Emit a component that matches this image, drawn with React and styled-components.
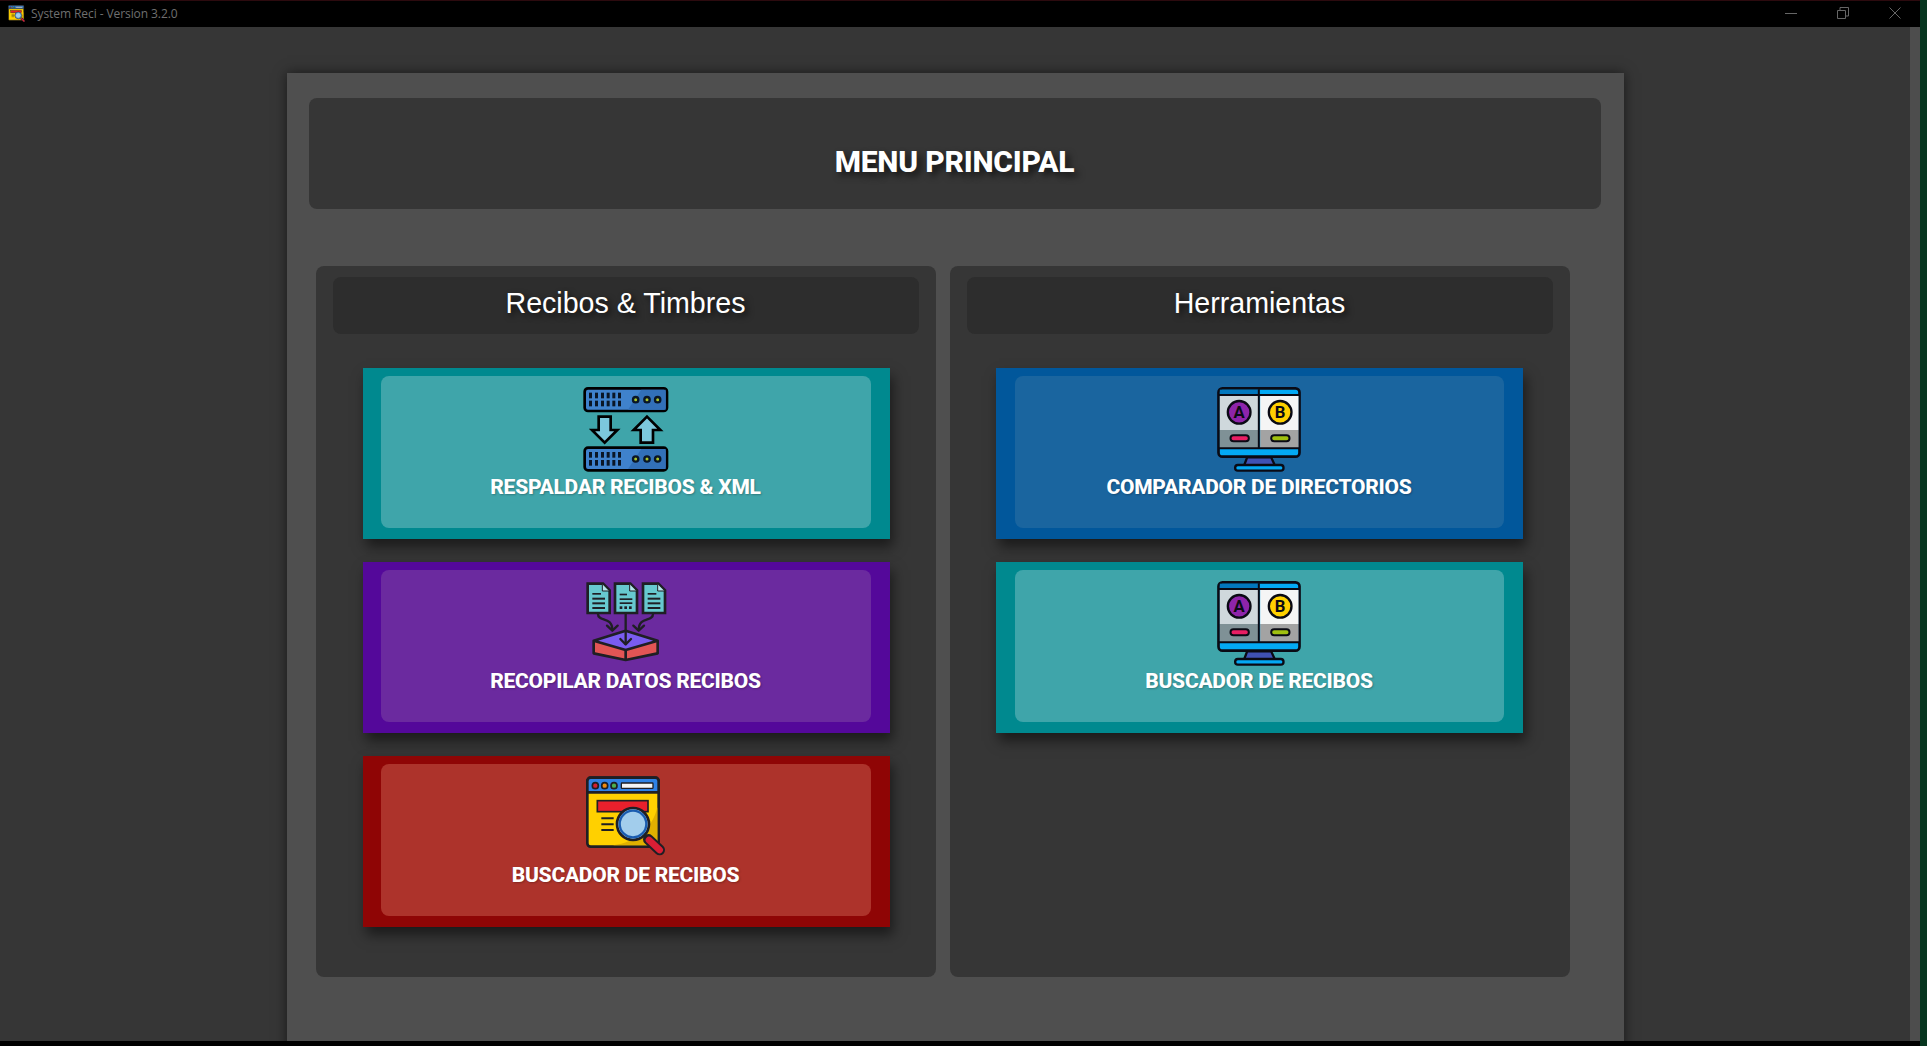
import React from "react"
import styled, { createGlobalStyle } from "styled-components"

const GlobalStyle = createGlobalStyle`
  html, body {
    margin: 0;
    padding: 0;
    height: 100%;
    overflow: hidden;
    background: #07361f;
  }
`

const Frame = styled.div`
  width: 1927px;
  height: 1046px;
  display: grid;
  grid-template-columns: 1920px 7px;
  overflow: hidden;
`

const Window = styled.div`
  display: flex;
  flex-direction: column;
  height: 1046px;
  background: #000;
`

const TitleBar = styled.header`
  height: 27px;
  box-sizing: border-box;
  flex: none;
  display: flex;
  align-items: center;
  padding: 0 19px 2px 8px;
  background: #000;
  border-top: 1px solid #2c0a0e;
  font-family: "Open Sans", "Noto Sans", sans-serif;
  font-size: 12px;
  color: #6f6f6f;
`

const TitleIcon = styled.svg`
  width: 17px;
  height: 17px;
  margin-right: 6px;
`

const TitleText = styled.span`
  flex: 1;
  letter-spacing: -0.08px;
`

const WinControls = styled.div`
  display: flex;
  gap: 40px;
`

const WinIcon = styled.svg`
  width: 12px;
  height: 12px;
  stroke: #666;
  fill: none;
  stroke-width: 1;
`

const Body = styled.div`
  height: 1014px;
  flex: none;
  display: flex;
  overflow: hidden;
`

const Content = styled.main`
  flex: 1;
  background: #363636;
  display: flex;
  justify-content: center;
  padding-top: 46px;
`

const Scrollbar = styled.div`
  width: 10px;
  flex: none;
  background: #4d4d4d;
`

const Panel = styled.div`
  width: 1337px;
  height: 980px;
  flex: none;
  box-sizing: border-box;
  padding: 25px 23px 0 22px;
  background: #4f4f4f;
  box-shadow: 0 0 12px rgba(0, 0, 0, 0.55);
`

const Header = styled.div`
  height: 111px;
  box-sizing: border-box;
  padding-top: 47px;
  background: #363636;
  border-radius: 8px;
  text-align: center;
`

const Title = styled.h1`
  margin: 0;
  font-family: Roboto, sans-serif;
  font-size: 30px;
  line-height: 34px;
  font-weight: 800;
  letter-spacing: -0.2px;
  color: #fff;
  text-shadow: 4px 4px 7px rgba(0, 0, 0, 0.65);
`

const Columns = styled.div`
  display: grid;
  grid-template-columns: 620px 620px;
  gap: 14px;
  margin: 57px 0 0 7px;
`

const Column = styled.section`
  height: 711px;
  box-sizing: border-box;
  padding: 11px 17px 0;
  background: #363636;
  border-radius: 8px;
`

const ColumnTitle = styled.h2`
  margin: 0;
  height: 57px;
  background: #2d2d2d;
  border-radius: 8px;
  font-family: "Liberation Sans", Arial, sans-serif;
  font-size: 28.6px;
  line-height: 52px;
  font-weight: 400;
  text-align: center;
  color: #fff;
  text-shadow: 3px 3px 6px rgba(0, 0, 0, 0.7);
`

const CardList = styled.div`
  display: flex;
  flex-direction: column;
  gap: 23px;
  width: 527px;
  margin: 34px 0 0 ${props => props.$inset}px;
`

const Card = styled.button`
  display: block;
  width: 100%;
  height: 171px;
  padding: 8px 19px 11px ${props => props.$padLeft}px;
  border: 0;
  box-sizing: border-box;
  background: ${props => props.$outer};
  box-shadow: 3px 8px 12px rgba(0, 0, 0, 0.5);
  cursor: pointer;
`

const CardInner = styled.div`
  height: 100%;
  box-sizing: border-box;
  padding-top: 9px;
  display: flex;
  flex-direction: column;
  align-items: center;
  background: ${props => props.$inner};
  border-radius: 8px;
`

const CardIcon = styled.svg`
  width: 84px;
  height: 84px;
  overflow: visible;
  flex: none;
`

const CardLabel = styled.span`
  margin-top: 3px;
  font-family: Roboto, sans-serif;
  font-size: 21px;
  line-height: 30px;
  font-weight: 800;
  letter-spacing: -0.25px;
  color: #fff;
  text-shadow: 1px 1px 2px rgba(0, 0, 0, 0.25);
`

const ServerRow = ({ y }) => {
  const cols = [58, 76, 94, 111, 128, 145]
  return (
    <g>
      <rect x="45" y={y} width="247" height="68" rx="10" fill="#3f82cc" stroke="#000" strokeWidth="8" />
      <path d={`M175 ${y + 64}L215 ${y + 4}H288V${y + 64}Z`} fill="#3270b8" />
      {cols.map(x => (
        <g key={x}>
          <rect x={x} y={y + 13} width="9" height="17" fill="#0a1626" />
          <rect x={x} y={y + 37} width="9" height="17" fill="#0a1626" />
        </g>
      ))}
      {[198, 232, 264].map(x => (
        <circle key={x} cx={x} cy={y + 34} r="8" fill="#a8c42a" stroke="#0a1626" strokeWidth="7" />
      ))}
    </g>
  )
}

const ServerIcon = () => (
  <CardIcon viewBox="43 30 252 252">
    <ServerRow y={40} />
    <ServerRow y={218} />
    <path d="M87 125H123V165H143L105 203L67 165H87Z" fill="#7cc8dc" stroke="#000" strokeWidth="8" strokeLinejoin="miter" />
    <path d="M232 125L272 165H250V203H213V165H192Z" fill="#7cc8dc" stroke="#000" strokeWidth="8" strokeLinejoin="miter" />
  </CardIcon>
)

const DocSheet = ({ x, dense }) => (
  <g>
    <path d={`M${x} 44H${x + 46}L${x + 66} 64V132H${x}Z`} fill="#67c9cf" stroke="#1f1f24" strokeWidth="8" />
    <path d={`M${x + 44} 46V66H${x + 64}`} fill="#b5e6ea" stroke="#1f1f24" strokeWidth="3" />
    {dense ? (
      <g fill="#1f1f24">
        <rect x={x + 14} y="74" width="22" height="5" />
        <rect x={x + 14} y="88" width="38" height="5" />
        <rect x={x + 14} y="100" width="38" height="5" />
        <rect x={x + 14} y="112" width="8" height="8" />
        <rect x={x + 28} y="112" width="8" height="8" />
        <rect x={x + 42} y="112" width="8" height="8" />
      </g>
    ) : (
      <g fill="#1f1f24">
        <rect x={x + 14} y="72" width="26" height="5" />
        <rect x={x + 14} y="86" width="38" height="6" />
        <rect x={x + 14} y="100" width="38" height="6" />
        <rect x={x + 14} y="114" width="38" height="6" />
      </g>
    )}
  </g>
)

const CollectIcon = () => (
  <CardIcon viewBox="43 30 252 252">
    <DocSheet x={54} />
    <DocSheet x={136} dense />
    <DocSheet x={220} />
    <path d="M72 215L168 185L264 215L168 243Z" fill="#7a5cf0" />
    <path d="M72 215V253L168 273V243Z" fill="#e25555" />
    <path d="M264 215V253L168 273V243Z" fill="#e25555" />
    <path d="M72 215L168 185L264 215L168 243ZM72 215V253L168 273L264 253V215M168 243V273" fill="none" stroke="#1f1f24" strokeWidth="8" strokeLinejoin="round" />
    <g fill="none" stroke="#1f1f24" strokeWidth="7" strokeLinecap="round" strokeLinejoin="round">
      <path d="M85 135C85 160 128 140 128 183" />
      <path d="M112 170L128 185L144 170" />
      <path d="M168 135V225" />
      <path d="M152 210L168 226L184 210" />
      <path d="M250 135C250 160 207 140 207 183" />
      <path d="M191 170L207 185L223 170" />
    </g>
  </CardIcon>
)

const SearchArt = () => (
  <g>
    <rect x="53" y="41" width="214" height="207" rx="10" fill="#ffd000" stroke="#1f1f24" strokeWidth="8" />
    <path d="M263 130V244H130C200 236 250 190 263 130Z" fill="#e0b000" />
    <path d="M53 85V51a10 10 0 0 1 10-10H257a10 10 0 0 1 10 10V85Z" fill="#2f82e6" stroke="#1f1f24" strokeWidth="8" />
    <circle cx="77" cy="65" r="9" fill="#d42030" stroke="#1f1f24" strokeWidth="5" />
    <circle cx="105" cy="65" r="9" fill="#f08a10" stroke="#1f1f24" strokeWidth="5" />
    <circle cx="133" cy="65" r="9" fill="#4caf50" stroke="#1f1f24" strokeWidth="5" />
    <rect x="155" y="57" width="95" height="16" rx="2" fill="#f4f4f4" stroke="#1f1f24" strokeWidth="4" />
    <rect x="83" y="110" width="152" height="33" fill="#e8202c" stroke="#1f1f24" strokeWidth="5" />
    <path d="M95 163H132M95 181H132M95 198H132" stroke="#1f1f24" strokeWidth="6" />
    <path d="M236 226L270 258" stroke="#1f1f24" strokeWidth="32" strokeLinecap="round" />
    <path d="M238 228L270 258" stroke="#d81e35" strokeWidth="20" strokeLinecap="round" />
    <circle cx="190" cy="180" r="48" fill="#a2cdec" stroke="#1f1f24" strokeWidth="8" />
    <circle cx="190" cy="180" r="40" fill="none" stroke="#1a5cb0" strokeWidth="7" />
  </g>
)

const SearchIcon = () => (
  <CardIcon viewBox="43 27 252 252">
    <SearchArt />
  </CardIcon>
)

const CompareIcon = () => (
  <CardIcon viewBox="37.5 15 252 252">
    <path d="M128 232H200L212 258H118Z" fill="#3f51b5" stroke="#0a0a14" strokeWidth="7" />
    <rect x="92" y="255" width="145" height="17" rx="8" fill="#03a9f4" stroke="#0a0a14" strokeWidth="7" />
    <rect x="42" y="25" width="243" height="205" rx="12" fill="#03a9f4" stroke="#0a0a14" strokeWidth="8" />
    <rect x="46" y="29" width="117" height="15" fill="#0277bd" />
    <rect x="46" y="46" width="117" height="104" fill="#cfd8dc" />
    <rect x="167" y="46" width="115" height="104" fill="#f5f5f5" />
    <rect x="46" y="150" width="117" height="54" fill="#7f9196" />
    <rect x="167" y="150" width="115" height="54" fill="#a3a3a3" />
    <path d="M163 28V204M42 45H285M42 205H285" stroke="#0a0a14" strokeWidth="6" fill="none" />
    <circle cx="104" cy="97" r="34" fill="#8e24aa" stroke="#0a0a14" strokeWidth="7" />
    <circle cx="227" cy="97" r="34" fill="#ffd000" stroke="#0a0a14" strokeWidth="7" />
    <text x="104" y="115" textAnchor="middle" fontFamily="Roboto, sans-serif" fontWeight="700" fontSize="50" fill="#0a0a14">A</text>
    <text x="227" y="115" textAnchor="middle" fontFamily="Roboto, sans-serif" fontWeight="700" fontSize="50" fill="#0a0a14">B</text>
    <rect x="78" y="166" width="55" height="18" rx="9" fill="#e91e63" stroke="#0a0a14" strokeWidth="6" />
    <rect x="200" y="166" width="55" height="18" rx="9" fill="#a0c010" stroke="#0a0a14" strokeWidth="6" />
  </CardIcon>
)

const MenuCard = ({ outer, inner, padLeft = 18, icon, label }) => (
  <Card $outer={outer} $padLeft={padLeft}>
    <CardInner $inner={inner}>
      {icon}
      <CardLabel>{label}</CardLabel>
    </CardInner>
  </Card>
)

const tones = {
  teal: { outer: "#00898f", inner: "#3fa5aa" },
  purple: { outer: "#54089a", inner: "#6b2a9f" },
  red: { outer: "#8f0505", inner: "#ad332b" },
  blue: { outer: "#01579b", inner: "#1a659f" },
}

export default function App() {
  return (
    <Frame>
      <GlobalStyle />
      <Window>
        <TitleBar>
          <TitleIcon viewBox="45 33 240 240">
            <SearchArt />
          </TitleIcon>
          <TitleText>System Reci - Version 3.2.0</TitleText>
          <WinControls>
            <WinIcon viewBox="0 0 12 12"><path d="M0 6.5H12" /></WinIcon>
            <WinIcon viewBox="0 0 12 12"><path d="M.5 3.5H8.5V11.5H.5ZM3 3.5V.5H11.5V9H8.5" /></WinIcon>
            <WinIcon viewBox="0 0 12 12"><path d="M.5.5L11.5 11.5M11.5.5L.5 11.5" /></WinIcon>
          </WinControls>
        </TitleBar>
        <Body>
          <Content>
            <Panel>
              <Header>
                <Title>MENU PRINCIPAL</Title>
              </Header>
              <Columns>
                <Column>
                  <ColumnTitle>Recibos &amp; Timbres</ColumnTitle>
                  <CardList $inset={30}>
                    <MenuCard {...tones.teal} icon={<ServerIcon />} label="RESPALDAR RECIBOS & XML" />
                    <MenuCard {...tones.purple} icon={<CollectIcon />} label="RECOPILAR DATOS RECIBOS" />
                    <MenuCard {...tones.red} icon={<SearchIcon />} label="BUSCADOR DE RECIBOS" />
                  </CardList>
                </Column>
                <Column>
                  <ColumnTitle>Herramientas</ColumnTitle>
                  <CardList $inset={29}>
                    <MenuCard {...tones.blue} padLeft={19} icon={<CompareIcon />} label="COMPARADOR DE DIRECTORIOS" />
                    <MenuCard {...tones.teal} padLeft={19} icon={<CompareIcon />} label="BUSCADOR DE RECIBOS" />
                  </CardList>
                </Column>
              </Columns>
            </Panel>
          </Content>
          <Scrollbar />
        </Body>
      </Window>
    </Frame>
  )
}
